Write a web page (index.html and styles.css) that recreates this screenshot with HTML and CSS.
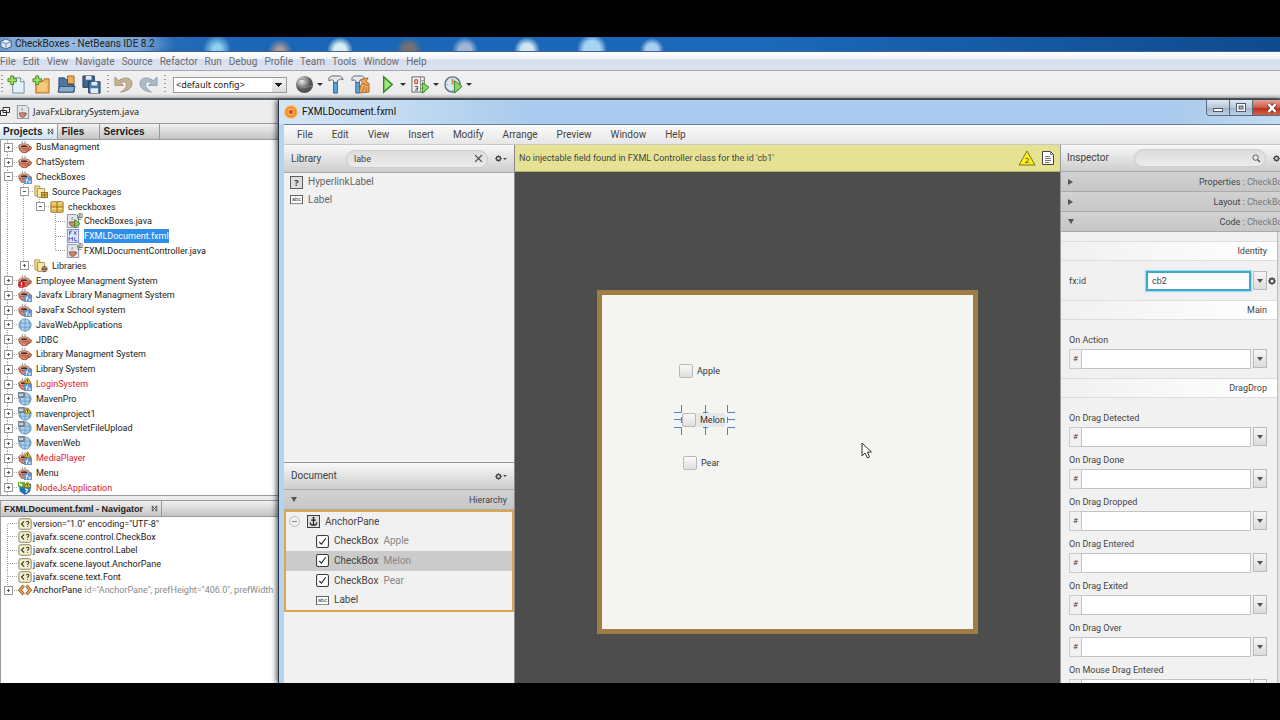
FILE: index.html
```html
<!DOCTYPE html>
<html lang="en">
<head>
  <meta charset="UTF-8">
  <title>CheckBoxes - NetBeans IDE 8.2</title>
  <link rel="stylesheet" href="styles.css">
</head>
<body>
  <svg class="sprite" aria-hidden="true">
    <symbol id="cup" viewBox="0 0 16 16">
      <path d="M5 4c-1-1 1-2 0-3M8 4c-1-1 1-2 0-3" fill="none" stroke="#777" stroke-width="1"/>
      <path d="M1 7c0 5 3 7.500 6.500 7.500S13 12 13 7z" fill="#cf7355" stroke="#8f4733"/>
      <ellipse cx="7" cy="7" rx="6" ry="2.500" fill="#eec7b3" stroke="#99513d"/>
      <ellipse cx="7" cy="7.200" rx="4" ry="1.200" fill="#5b2415"/>
      <path d="M13 8c3-1 3 3-1.500 4" fill="none" stroke="#a5482f" stroke-width="1.500"/>
      <path d="M3 10c1 2 3 3 5 3" fill="none" stroke="#f0b39a"/>
    </symbol>
    <symbol id="fx" viewBox="0 0 16 16">
      <rect x="7" y="8" width="9" height="8" rx="1" fill="#5c92cc"/>
      <path d="M11.500 9.500c-2-.5-1 2-2 5.500M8.500 11.500h3M12 12l2.500 3M14.500 12L12 15" fill="none" stroke="#fff"/>
    </symbol>
    <symbol id="warn" viewBox="0 0 16 16">
      <path d="M11 1l4 6H7z" fill="#f6d73c" stroke="#7e6a12"/>
      <path d="M11 3v3" stroke="#222"/>
    </symbol>
    <symbol id="err" viewBox="0 0 16 16">
      <circle cx="4" cy="12" r="4" fill="#d4202a"/>
      <path d="M4 9.500v3M4 13.500v1" stroke="#fff" stroke-width="1.500"/>
    </symbol>
    <symbol id="web" viewBox="0 0 16 16">
      <circle cx="8" cy="8" r="7" fill="#a9cfea" stroke="#5f8bad"/>
      <path d="M1.500 6h13M1.500 10.500h13M8 1v14M4 2.500c-2 3-2 8 0 11M12 2.500c2 3 2 8 0 11" fill="none" stroke="#6d9cc4"/>
    </symbol>
    <symbol id="maven" viewBox="0 0 16 16">
      <rect x="0" y="0" width="7" height="6" rx="1" fill="#8b97a5" stroke="#5d6875"/>
      <path d="M2 4.500v-2l1.500 1.500L5 2.500v2" fill="none" stroke="#fff"/>
    </symbol>
    <symbol id="node" viewBox="0 0 16 16">
      <path d="M1 3h14l-1 9-6 4-6-4z" fill="#1d72b8"/>
      <path d="M0 1h8v6H0z" fill="#6bab3c"/>
      <path d="M2 5V3l2 2V3M8 9l3 1-2 3" fill="none" stroke="#fff" stroke-width="1.300"/>
    </symbol>
    <symbol id="folder" viewBox="0 0 16 16">
      <path d="M1 1h5l1 2v11L1 12z" fill="#f3d98a" stroke="#b08c3a"/>
      <path d="M4 4h8v10H4z" fill="#f8e7ab" stroke="#b08c3a"/>
    </symbol>
    <symbol id="pkgbadge" viewBox="0 0 16 16">
      <rect x="8.500" y="8.500" width="7" height="6" fill="#e3b54b" stroke="#8e6b1e"/>
      <path d="M8.500 11.500h7M12 8.500v6" stroke="#8e6b1e"/>
    </symbol>
    <symbol id="libbadge" viewBox="0 0 16 16">
      <circle cx="12" cy="11.500" r="3.500" fill="#6e5a45"/>
      <path d="M9 10h6M9 13h6" stroke="#c9b08d"/>
    </symbol>
    <symbol id="package" viewBox="0 0 16 16">
      <rect x="1" y="2" width="14" height="12" rx="1" fill="#e9bf57" stroke="#8e6b1e"/>
      <path d="M1 8h14M8 2v12" stroke="#8e6b1e"/>
      <path d="M2 3.500h5M9 3.500h5M2 9.500h5M9 9.500h5" stroke="#f9e6a6"/>
    </symbol>
    <symbol id="java" viewBox="0 0 16 16">
      <path d="M1.500.5h10l3 3v12h-13z" fill="#dfe5ec" stroke="#7f8a96"/>
      <path d="M4 9c0 3 1 5 3.500 5S11 12 11 9z" fill="#cf8a6f" stroke="#8d4f3b"/>
      <path d="M7 6.500c-1-1 1-2 0-3M10.500 9.500c3 0 2 2 0 2" fill="none" stroke="#8b5b48"/>
    </symbol>
    <symbol id="runbadge" viewBox="0 0 16 16">
      <path d="M10 6.500l6 4.500-6 4.500z" fill="#8ed25a" stroke="#2d7d1e"/>
    </symbol>
    <symbol id="fxml" viewBox="0 0 16 16">
      <rect x="1.500" y=".5" width="13" height="15" fill="#dfe6fb" stroke="#7484c8"/>
      <path d="M4 7V2.500h3M4 4.500h2M9 2.500l3 4M12 2.500l-3 4M3.500 13.500v-4l2 2 2-2v4M10 9.500v4h3" fill="none" stroke="#3c50c4"/>
    </symbol>
    <symbol id="tag" viewBox="0 0 16 16">
      <rect x="1" y="2" width="14" height="12" rx="2" fill="#f7f0c8" stroke="#7b734c"/>
      <path d="M7 5L4 8l3 3" fill="none" stroke="#333" stroke-width="1.300"/>
      <path d="M9.500 6c0-1.500 3-1.500 3 0S11 7.500 11 9M11 10.500v1" fill="none" stroke="#333" stroke-width="1.200"/>
    </symbol>
    <symbol id="element" viewBox="0 0 16 16">
      <path d="M6.500 3L2 8l4.500 5M9.500 3L14 8l-4.500 5" fill="none" stroke="#a4612a" stroke-width="3.500"/>
      <path d="M6.500 3L2 8l4.500 5M9.500 3L14 8l-4.500 5" fill="none" stroke="#f0a95c" stroke-width="1.500"/>
    </symbol>
    <symbol id="gear" viewBox="0 0 12 12">
      <circle cx="6" cy="6" r="3.500" fill="none" stroke="#4c4c4c" stroke-width="2.500"/>
      <path d="M6 0v2M6 10v2M0 6h2M10 6h2M2 2l1 1M9 9l1 1M2 10l1-1M9 3l1-1" stroke="#4c4c4c" stroke-width="1.500"/>
    </symbol>
    <symbol id="check" viewBox="0 0 12 12">
      <rect x=".5" y=".5" width="11" height="11" rx="1.500" fill="#fff" stroke="#3c3c3c"/>
      <path d="M3 6.500l2 2L9 3" fill="none" stroke="#2c2c2c" stroke-width="1.100"/>
    </symbol>
    <symbol id="abc" viewBox="0 0 14 10">
      <rect x=".5" y=".5" width="13" height="9" fill="#fff" stroke="#555"/>
      <text x="7" y="7" font-family="Liberation Sans" font-size="6" text-anchor="middle" fill="#333">abc</text>
    </symbol>
    <symbol id="closetab" viewBox="0 0 8 8">
      <path d="M1.500 1v6M6.500 1v6M1 1.500h2M5 1.500h2M1 6.500h2M5 6.500h2M2 2l4 4M6 2L2 6" fill="none" stroke="#555"/>
    </symbol>
  </svg>

  <div class="screen">
    <header class="titlebar">
      <svg class="cube" viewBox="0 0 14 14"><path d="M7 1l6 3v6l-6 3-6-3V4z" fill="#dbe9f7" stroke="#2c4d73"/><path d="M1 4l6 3 6-3M7 7v6" fill="none" stroke="#56799f"/></svg>
      <h1>CheckBoxes - NetBeans IDE 8.2</h1>
    </header>

    <nav class="menubar">
      <a href="#">File</a><a href="#">Edit</a><a href="#">View</a><a href="#">Navigate</a><a href="#">Source</a><a href="#">Refactor</a><a href="#">Run</a><a href="#">Debug</a><a href="#">Profile</a><a href="#">Team</a><a href="#">Tools</a><a href="#">Window</a><a href="#">Help</a>
    </nav>

    <div class="toolbar">
      <i class="grip first"></i>
      <button class="tool" aria-label="New file"><svg viewBox="0 0 20 20"><path d="M6 3h8l4 4v12H6z" fill="#e4eff8" stroke="#6d8aa5"/><path d="M14 3v4h4" fill="#fff" stroke="#6d8aa5"/><path d="M4 1h3v3h3v3H7v3H4V7H1V4h3z" fill="#a6e05a" stroke="#3f8a1c"/></svg></button>
      <button class="tool" aria-label="New project"><svg viewBox="0 0 20 20"><path d="M4 6h8l1-2h5v15H4z" fill="#f2b45c" stroke="#a9732a"/><path d="M6 8h10v9H6z" fill="#f8c87f"/><path d="M4 1h3v3h3v3H7v3H4V7H1V4h3z" fill="#a6e05a" stroke="#3f8a1c"/></svg></button>
      <button class="tool" aria-label="Open project"><svg viewBox="0 0 20 20"><path d="M11 1h7v8h-7z" fill="#f0ab57" stroke="#a66d27"/><path d="M2 3h6l1 2h2v5h7v8H2z" fill="#50799e" stroke="#2c4f72"/><path d="M1 18l2-6h16l-2 6z" fill="#87acc9" stroke="#2c4f72"/></svg></button>
      <button class="tool" aria-label="Save all"><svg viewBox="0 0 20 20"><path d="M1 1h12v12H1z" fill="#3f668c" stroke="#1f3c5b"/><path d="M4 1h6v4H4z" fill="#dfe9f2"/><path d="M7 7h12v12H7z" fill="#4a759e" stroke="#1f3c5b"/><path d="M10 7h6v4h-6zM9 14h8v5H9z" fill="#e4edf5"/></svg></button>
      <i class="grip"></i>
      <button class="tool" aria-label="Undo"><svg viewBox="0 0 20 20"><path d="M1 2v9h9L7 8c4-2 7 0 6 4-1 2-3 4-6 6 7-1 12-4 12-9 0-6-8-8-14-3z" fill="#c5b297" stroke="#a8957a"/></svg></button>
      <button class="tool" aria-label="Redo"><svg viewBox="0 0 20 20"><path d="M19 2v9h-9l3-3C9 6 6 8 7 12c1 2 3 4 6 6C6 17 1 14 1 9c0-6 8-8 14-3z" fill="#abbcc8" stroke="#8fa2b0"/></svg></button>
      <i class="grip"></i>
      <select class="config" aria-label="Configuration"><option>&lt;default config&gt;</option></select>
      <button class="tool" aria-label="Browser"><svg viewBox="0 0 20 20"><defs><radialGradient id="ball" cx=".35" cy=".3"><stop offset="0" stop-color="#eee"/><stop offset="1" stop-color="#555"/></radialGradient></defs><circle cx="10" cy="10" r="9" fill="url(#ball)"/><path d="M5 5c3-2 4 1 7 0M3 12c4-2 5 2 9 1s4-2 6-1" fill="none" stroke="#888"/></svg></button><i class="caret"></i>
      <button class="tool" aria-label="Build"><svg viewBox="0 0 20 20"><path d="M3 6V3l3-2h8c2 0 3 1 4 4-2-1-3-1-4 0l-2 1v2H8V6L6 5z" fill="#e4e8ec" stroke="#5f6a75"/><path d="M8 8h4v11H8z" fill="#5ba3d9" stroke="#276a9d"/></svg></button>
      <button class="tool" aria-label="Clean and build"><svg viewBox="0 0 20 20"><path d="M1 6V3l2-2h8c2 0 3 1 4 4-2-1-3-1-4 0L9 6v2H5V6L3 5z" fill="#e4e8ec" stroke="#5f6a75"/><path d="M5 8h4v11H5z" fill="#5ba3d9" stroke="#276a9d"/><path d="M18 3l-2 4 3 2v9l-10 1c0-5 1-8 3-11l-2-3z" fill="#efa857" stroke="#a5682a"/><path d="M12 9l6 2M12 18l2-6M16 18v-5" fill="none" stroke="#a5682a"/></svg></button>
      <button class="tool split" aria-label="Run"><svg viewBox="0 0 20 20"><path d="M6 2l9 8-9 8z" fill="#a5e57a" stroke="#2f8a25" stroke-width="1.500"/></svg></button><i class="caret"></i>
      <button class="tool split" aria-label="Debug"><svg viewBox="0 0 20 20"><path d="M1 2h13v16H1z" fill="#f4f4f4" stroke="#666"/><path d="M10 2v16M10 6h4M10 10h4M10 14h4" stroke="#888"/><path d="M4 5h3v4H4z" fill="#f8c5b8" stroke="#c0392b"/><path d="M4 12h3v4H4M5 14h2" fill="none" stroke="#555"/><path d="M12 8l7 5-7 6z" fill="#8fd65c" stroke="#2f8a25"/></svg></button><i class="caret"></i>
      <button class="tool split" aria-label="Profile"><svg viewBox="0 0 20 20"><circle cx="9" cy="10" r="8" fill="#dce9f4" stroke="#5c7288" stroke-width="1.500"/><path d="M9 10V4" stroke="#d98a3a" stroke-width="2"/><path d="M3 10h1M9 16v1" stroke="#5c7288"/><path d="M11 6l8 6-8 7z" fill="#8fd65c" stroke="#2f8a25"/></svg></button><i class="caret"></i>
    </div>

    <div class="workspace">
      <aside class="explorer">
        <div class="filetab">
          <svg viewBox="0 0 10 10"><path d="M3 .5h6.500v5H3zM.5 3.500h6v5h-6z" fill="#eee" stroke="#333"/></svg>
          <svg class="icon" viewBox="0 0 16 16"><use href="#java"/></svg>
          <span>JavaFxLibrarySystem.java</span>
        </div>
        <div class="tabs">
          <button class="tab active">Projects <svg viewBox="0 0 8 8"><use href="#closetab"/></svg></button>
          <button class="tab files">Files</button>
          <button class="tab services">Services</button>
        </div>
        <ul class="tree projects">
          <li><button class="knob plus" aria-label="Expand"></button><svg class="icon"><use href="#cup"/></svg><span>BusManagment</span></li>
          <li><button class="knob plus" aria-label="Expand"></button><svg class="icon"><use href="#cup"/></svg><span>ChatSystem</span></li>
          <li><button class="knob" aria-label="Collapse"></button><svg class="icon"><use href="#cup"/><use href="#fx"/></svg><span>CheckBoxes</span></li>
          <li><i class="line"></i><button class="knob" aria-label="Collapse"></button><svg class="icon"><use href="#folder"/><use href="#pkgbadge"/></svg><span>Source Packages</span></li>
          <li><i class="line"></i><i class="line"></i><button class="knob last" aria-label="Collapse"></button><svg class="icon"><use href="#package"/></svg><span>checkboxes</span></li>
          <li><i class="line"></i><i class="line"></i><i></i><i class="line tee"></i><svg class="icon"><use href="#java"/><use href="#runbadge"/></svg><span class="linked">CheckBoxes.java</span></li>
          <li><i class="line"></i><i class="line"></i><i></i><i class="line tee"></i><svg class="icon"><use href="#fxml"/></svg><span class="selected">FXMLDocument.fxml</span></li>
          <li><i class="line"></i><i class="line"></i><i></i><i class="line tee end"></i><svg class="icon"><use href="#java"/></svg><span class="linked">FXMLDocumentController.java</span></li>
          <li><i class="line"></i><button class="knob plus last" aria-label="Expand"></button><svg class="icon"><use href="#folder"/><use href="#libbadge"/></svg><span>Libraries</span></li>
          <li><button class="knob plus" aria-label="Expand"></button><svg class="icon"><use href="#cup"/><use href="#err"/></svg><span>Employee Managment System</span></li>
          <li><button class="knob plus" aria-label="Expand"></button><svg class="icon"><use href="#cup"/><use href="#fx"/></svg><span>Javafx Library Managment System</span></li>
          <li><button class="knob plus" aria-label="Expand"></button><svg class="icon"><use href="#cup"/><use href="#fx"/></svg><span>JavaFx School system</span></li>
          <li><button class="knob plus" aria-label="Expand"></button><svg class="icon"><use href="#web"/></svg><span>JavaWebApplications</span></li>
          <li><button class="knob plus" aria-label="Expand"></button><svg class="icon"><use href="#cup"/></svg><span>JDBC</span></li>
          <li><button class="knob plus" aria-label="Expand"></button><svg class="icon"><use href="#cup"/></svg><span>Library Managment System</span></li>
          <li><button class="knob plus" aria-label="Expand"></button><svg class="icon"><use href="#cup"/><use href="#fx"/></svg><span>Library System</span></li>
          <li><button class="knob plus" aria-label="Expand"></button><svg class="icon"><use href="#cup"/><use href="#fx"/><use href="#warn"/></svg><span class="broken">LoginSystem</span></li>
          <li><button class="knob plus" aria-label="Expand"></button><svg class="icon"><use href="#web"/><use href="#maven"/></svg><span>MavenPro</span></li>
          <li><button class="knob plus" aria-label="Expand"></button><svg class="icon"><use href="#web"/><use href="#maven"/><use href="#warn"/></svg><span>mavenproject1</span></li>
          <li><button class="knob plus" aria-label="Expand"></button><svg class="icon"><use href="#web"/><use href="#maven"/></svg><span>MavenServletFileUpload</span></li>
          <li><button class="knob plus" aria-label="Expand"></button><svg class="icon"><use href="#web"/><use href="#maven"/></svg><span>MavenWeb</span></li>
          <li><button class="knob plus" aria-label="Expand"></button><svg class="icon"><use href="#cup"/><use href="#fx"/><use href="#warn"/></svg><span class="broken">MediaPlayer</span></li>
          <li><button class="knob plus" aria-label="Expand"></button><svg class="icon"><use href="#cup"/><use href="#fx"/></svg><span>Menu</span></li>
          <li><button class="knob plus" aria-label="Expand"></button><svg class="icon"><use href="#node"/><use href="#warn"/></svg><span class="broken">NodeJsApplication</span></li>
        </ul>
        <section class="navigator">
          <div class="tabs">
            <button class="tab file">FXMLDocument.fxml - Navigator <svg viewBox="0 0 8 8"><use href="#closetab"/></svg></button>
          </div>
          <ul class="tree nodes">
            <li><i class="line tee start"></i><svg class="icon"><use href="#tag"/></svg><span>version="1.0" encoding="UTF-8"</span></li>
            <li><i class="line tee"></i><svg class="icon"><use href="#tag"/></svg><span>javafx.scene.control.CheckBox</span></li>
            <li><i class="line tee"></i><svg class="icon"><use href="#tag"/></svg><span>javafx.scene.control.Label</span></li>
            <li><i class="line tee"></i><svg class="icon"><use href="#tag"/></svg><span>javafx.scene.layout.AnchorPane</span></li>
            <li><i class="line tee"></i><svg class="icon"><use href="#tag"/></svg><span>javafx.scene.text.Font</span></li>
            <li><button class="knob plus last" aria-label="Expand"></button><svg class="icon"><use href="#element"/></svg><span>AnchorPane <em>id="AnchorPane", prefHeight="406.0", prefWidth</em></span></li>
          </ul>
        </section>
      </aside>

      <main class="builder">
        <header class="caption">
          <svg viewBox="0 0 14 14"><circle cx="7" cy="7" r="6" fill="#f08a1e" stroke="#f6b04a" stroke-width="1.500"/><path d="M4 4l6 6M10 4l-6 6M7 3v8M3 7h8" stroke="#fbd3a0"/><circle cx="7" cy="7" r="2" fill="#d9481c"/></svg>
          <h2>FXMLDocument.fxml</h2>
          <div class="winbuttons">
            <button aria-label="Minimize"><svg viewBox="0 0 12 10"><rect x="1.500" y="5.500" width="9" height="3" fill="#fff" stroke="#4d5a6b"/></svg></button>
            <button aria-label="Restore"><svg viewBox="0 0 12 10"><rect x="1.500" y=".5" width="9" height="8" fill="#fff" stroke="#4d5a6b"/><rect x="4" y="3" width="4" height="3" fill="#9fb4ca" stroke="#4d5a6b"/></svg></button>
            <button class="close" aria-label="Close"><svg viewBox="0 0 12 10"><path d="M2.500 1l7 8M9.500 1l-7 8" stroke="#5e3030" stroke-width="4"/><path d="M2.500 1l7 8M9.500 1l-7 8" stroke="#fff" stroke-width="2.500"/></svg></button>
          </div>
        </header>
        <nav class="fxmenu">
          <a href="#">File</a><a href="#">Edit</a><a href="#">View</a><a href="#">Insert</a><a href="#">Modify</a><a href="#">Arrange</a><a href="#">Preview</a><a href="#">Window</a><a href="#">Help</a>
        </nav>
        <div class="panes">
          <section class="left">
            <div class="bar">
              <label for="library">Library</label>
              <div class="search">
                <input id="library" type="text" value="labe">
                <button aria-label="Clear"><svg viewBox="0 0 8 8"><path d="M1 1l6 6M7 1L1 7" stroke="#444" stroke-width="1.100"/></svg></button>
              </div>
              <button class="cog" aria-label="Library options"><svg viewBox="0 0 12 12"><use href="#gear"/></svg><i></i></button>
            </div>
            <ul class="library">
              <li><svg viewBox="0 0 14 14"><rect x=".5" y=".5" width="13" height="13" fill="#ddd" stroke="#555"/><text x="7" y="11" font-family="Open Sans" font-size="10" font-weight="700" text-anchor="middle" fill="#333">?</text></svg>HyperlinkLabel</li>
              <li><svg viewBox="0 0 14 10"><use href="#abc"/></svg>Label</li>
            </ul>
            <div class="bar document">
              <h3>Document</h3>
              <button class="cog" aria-label="Document options"><svg viewBox="0 0 12 12"><use href="#gear"/></svg><i></i></button>
            </div>
            <button class="fold open"><i></i><span>Hierarchy</span></button>
            <ul class="hierarchy">
              <li class="root"><button aria-label="Collapse"></button><svg viewBox="0 0 14 14"><rect x=".5" y=".5" width="13" height="13" fill="#ddd" stroke="#333"/><path d="M7 3v8M4.500 5.500h5M3.500 8c0 4 7 4 7 0" fill="none" stroke="#222" stroke-width="1.300"/><circle cx="7" cy="3" r="1" fill="#222"/></svg>AnchorPane</li>
              <li><svg viewBox="0 0 12 12"><use href="#check"/></svg>CheckBox <em>Apple</em></li>
              <li class="current"><svg viewBox="0 0 12 12"><use href="#check"/></svg>CheckBox <em>Melon</em></li>
              <li><svg viewBox="0 0 12 12"><use href="#check"/></svg>CheckBox <em>Pear</em></li>
              <li><svg viewBox="0 0 14 10"><use href="#abc"/></svg>Label</li>
            </ul>
          </section>

          <section class="content">
            <div class="message">
              <span>No injectable field found in FXML Controller class for the id 'cb1'</span>
              <svg class="alert" viewBox="0 0 18 16"><path d="M9 1l8 14H1z" fill="#ffee1a" stroke="#77731c"/><text x="9" y="13" font-family="Open Sans" font-size="8" text-anchor="middle" fill="#333">2</text></svg>
              <svg class="page" viewBox="0 0 12 14"><path d="M.5.5h8l3 3v10H.5z" fill="#fff" stroke="#444"/><path d="M8.500.5v3h3M3 5.500h5M3 7.500h6M3 9.500h6M3 11.500h4" fill="none" stroke="#777"/></svg>
            </div>
            <div class="canvas">
              <div class="artboard">
                <label class="apple"><input type="checkbox">Apple</label>
                <label class="melon"><input type="checkbox">Melon</label>
                <label class="pear"><input type="checkbox">Pear</label>
                <svg class="handles" viewBox="0 0 62 32"><path d="M7.500 1v7.500H0M53.500 1v7.500H61M7.500 31v-7.500H0M53.500 31v-7.500H61M31.500 1v7.500M29 8.500h5M31.500 31v-7.500M29 23.500h5M0 15.500h7.500M7.500 13v6M61 15.500h-7.500M53.500 13v6" fill="none" stroke="#3f8cc9"/></svg>
                <svg class="pointer" viewBox="0 0 12 18"><path d="M1 1v13l3-3 2.500 5 2-1-2-5h4z" fill="#fff" stroke="#333"/></svg>
              </div>
            </div>
          </section>

          <section class="inspector">
            <div class="bar">
              <label for="find">Inspector</label>
              <div class="search">
                <input id="find" type="text">
                <svg viewBox="0 0 10 10"><circle cx="4" cy="4" r="3" fill="none" stroke="#555"/><path d="M6 6l3 3" stroke="#555" stroke-width="1.500"/></svg>
              </div>
              <button class="cog" aria-label="Inspector options"><svg viewBox="0 0 12 12"><use href="#gear"/></svg></button>
            </div>
            <button class="fold"><i></i><span>Properties : <em>CheckBox</em></span></button>
            <button class="fold"><i></i><span>Layout : <em>CheckBox</em></span></button>
            <button class="fold open"><i></i><span>Code : <em>CheckBox</em></span></button>
            <div class="code">
              <div class="fields">
                <h4>Identity</h4>
                <div class="identity">
                  <label for="fxid">fx:id</label>
                  <input id="fxid" type="text" value="cb2">
                  <button class="drop" aria-label="Choose id"></button>
                  <svg viewBox="0 0 12 12"><use href="#gear"/></svg>
                </div>
                <h4>Main</h4>
                <div class="group">
                  <div class="event"><label for="action">On Action</label><i>#</i><input id="action" type="text"><button class="drop" aria-label="Choose method"></button></div>
                </div>
                <h4>DragDrop</h4>
                <div class="group">
                  <div class="event"><label for="detected">On Drag Detected</label><i>#</i><input id="detected" type="text"><button class="drop" aria-label="Choose method"></button></div>
                  <div class="event"><label for="done">On Drag Done</label><i>#</i><input id="done" type="text"><button class="drop" aria-label="Choose method"></button></div>
                  <div class="event"><label for="dropped">On Drag Dropped</label><i>#</i><input id="dropped" type="text"><button class="drop" aria-label="Choose method"></button></div>
                  <div class="event"><label for="entered">On Drag Entered</label><i>#</i><input id="entered" type="text"><button class="drop" aria-label="Choose method"></button></div>
                  <div class="event"><label for="exited">On Drag Exited</label><i>#</i><input id="exited" type="text"><button class="drop" aria-label="Choose method"></button></div>
                  <div class="event"><label for="over">On Drag Over</label><i>#</i><input id="over" type="text"><button class="drop" aria-label="Choose method"></button></div>
                  <div class="event"><label for="mouse">On Mouse Drag Entered</label><i>#</i><input id="mouse" type="text"><button class="drop" aria-label="Choose method"></button></div>
                </div>
              </div>
              <div class="scrollbar"></div>
            </div>
          </section>
        </div>
      </main>
    </div>
  </div>
</body>
</html>
```

FILE: styles.css
```css
* { box-sizing: border-box; }
body { margin: 0; padding: 37px 0; height: 100vh; background: #000; font: 9px/14px Roboto, sans-serif; color: #222; overflow: hidden; }
h1, h2, h3, h4, ul { margin: 0; padding: 0; font-size: inherit; font-weight: normal; list-style: none; }
button, input, select { font: inherit; color: inherit; margin: 0; padding: 0; border: 0; border-radius: 0; background: none; min-width: 0; }
a { color: inherit; text-decoration: none; }
i, em { font-style: normal; }
svg { flex: none; display: block; }
.sprite { display: none; }

.screen { height: 100%; display: flex; flex-direction: column; overflow: hidden; background: #ededed; }
.titlebar {
  display: flex; align-items: center; gap: 3px; height: 14px; flex: none;
  background:
    radial-gradient(ellipse 100px 24px at 75px 50%, rgba(190, 215, 240, .75), rgba(190, 215, 240, .5) 70%, transparent),
    radial-gradient(circle at 217px 12px, #8fd0ee 4px, transparent 14px),
    radial-gradient(circle at 280px 14px, #b09a94 3px, transparent 12px),
    radial-gradient(circle at 340px 13px, #d6ecf0 6px, transparent 13px),
    radial-gradient(circle at 409px 13px, #77706f 5px, transparent 13px),
    radial-gradient(circle at 465px 13px, #9db5d6 6px, transparent 13px),
    radial-gradient(circle at 527px 13px, #cfe6ee 6px, transparent 13px),
    radial-gradient(circle at 592px 12px, #a8d4f4 8px, transparent 15px),
    radial-gradient(circle at 652px 13px, #a9cdec 6px, transparent 12px),
    linear-gradient(90deg, #3a76b9, #1a65b6 20%, #1b68b8 60%, #0f4a8c);
}
.titlebar h1 { font-size: 10px; }
.cube { width: 12px; height: 12px; }
.menubar { display: flex; gap: 7px; flex: none; height: 20px; padding: 2px 0 0; border-top: 1px solid #42618d; border-bottom: 1px solid #a5a8b3; background: linear-gradient(#fff, #f1f5fb 35%, #d6deed 45%, #dfe3f1); font-size: 10px; line-height: 16px; color: #6c6c70; }
.toolbar { display: flex; align-items: center; flex: none; height: 29px; background: linear-gradient(#f1f1f1, #ececec 85%, #bbb); border-bottom: 2px solid #596069; }
.grip { width: 7px; height: 20px; background: repeating-linear-gradient(#999 0 1px, transparent 1px 4px) center/2px 100% no-repeat; }
.grip.first { width: 4px; }
.tool { width: 25px; height: 22px; display: grid; place-items: center; }
.tool svg { width: 19px; height: 19px; }
.tool.split { margin-left: 2px; }
.caret { width: 6px; border: solid transparent; border-width: 3px 3px 0; border-top-color: #333; }
.config { width: 114px; height: 16px; margin: 0 5px; padding-left: 2px; border: 1px solid #9a9a9a; appearance: none; font: 9px/14px "Noto Sans", sans-serif; background: conic-gradient(from -45deg at 50% 100%, #222 90deg, transparent 0) right 4px center/7px 4px no-repeat, linear-gradient(#f4f4f4, #ddd) right/14px 100% no-repeat, #fff; }

.workspace { flex: 1; min-height: 0; display: flex; }
.explorer { flex: 0 0 278px; min-width: 0; display: flex; flex-direction: column; overflow: hidden; }
.filetab { display: flex; align-items: center; gap: 3px; flex: none; height: 23px; font-family: "Noto Sans", sans-serif; }
.filetab svg { width: 10px; height: 10px; }
.filetab .icon { width: 14px; height: 14px; margin-left: 3px; }
.tabs { display: flex; flex: none; height: 17px; border: solid #9a9a9a; border-width: 1px 0; background: linear-gradient(#f1f1f1, #c4c4c4); }
.tab { display: flex; align-items: center; gap: 5px; padding: 0 3px; border-right: 1px solid #999; font: bold 10px/14px "Liberation Sans", sans-serif; }
.tab svg { width: 7px; height: 7px; }
.tab.active { background: linear-gradient(#fff, #cbe3f3); }
.tab.files { width: 42px; }
.tab.services { width: 60px; }
.tab.file { font-size: 9px; gap: 8px; }
.tree { display: grid; grid-auto-rows: 1fr; background: #fff; border-left: 1px solid #999; }
.tree li { display: flex; align-items: center; min-height: 0; min-width: 0; line-height: 14px; white-space: nowrap; }
.tree li > i, .knob { flex: none; width: 16px; align-self: stretch; }
.line, .knob { background: repeating-linear-gradient(#aaa 0 1px, transparent 1px 2px) 6px 0/1px 100% no-repeat; }
.line.tee, .knob { background: repeating-linear-gradient(#aaa 0 1px, transparent 1px 2px) 6px 0/1px 100% no-repeat, repeating-linear-gradient(90deg, #aaa 0 1px, transparent 1px 2px) 7px 50%/9px 1px no-repeat; }
.line.end, .knob.last { background-size: 1px 50%, 9px 1px; }
.line.start { background-position: 6px 100%, 7px 50%; background-size: 1px 50%, 9px 1px; }
.knob { display: flex; align-items: center; padding-left: 3px; }
.knob::before { content: ""; width: 7px; height: 7px; border: 1px solid #999; background: linear-gradient(#556, #556) center/3px 1px no-repeat, #fff; }
.knob.plus::before { background: linear-gradient(#556, #556) center/3px 1px no-repeat, linear-gradient(#556, #556) center/1px 3px no-repeat, #fff; }
.tree .icon { width: 14px; height: 14px; margin: 0 4px 0 1px; }
.selected { background: #2f8eea; color: #fff; }
.linked { position: relative; }
.linked::before { content: "@"; position: absolute; left: -7px; top: -3px; font-size: 7px; line-height: 10px; }
.broken { color: #e02030; }
.projects { flex: none; height: 356px; border-bottom: 1px solid #999; }
.navigator { flex: 1; margin-top: 4px; background: #fff; border-left: 1px solid #999; }
.nodes { height: 80px; border: 0; }
.nodes em { color: #8a8a8a; }
.tree.nodes .icon { margin-right: 1px; }

.builder { flex: 1; min-width: 0; display: flex; flex-direction: column; position: relative; border-left: 1px solid #22344c; background: #b7d3ee; box-shadow: -2px 0 5px rgba(0, 0, 0, .6); color: #444; }
.caption { display: flex; align-items: center; gap: 4px; flex: none; height: 24px; padding-left: 5px; background: linear-gradient(90deg, #d5e5f5, #c3dbf2 12%, #a9cbed 25%, #aacbed 90%, #c4dcf3); color: #111; }
.caption svg { width: 14px; height: 14px; }
.caption h2 { flex: 1; font-size: 10px; }
.winbuttons { display: flex; align-self: flex-start; border: solid #5a6b7f; border-width: 0 0 1px 1px; border-radius: 0 0 0 4px; overflow: hidden; }
.winbuttons button { width: 23px; height: 15px; display: grid; place-items: center; border-right: 1px solid #5a6b7f; background: linear-gradient(#dde7f1, #b9c8d8 50%, #9fb4ca 52%, #c0d2e3); }
.winbuttons svg { width: 12px; height: 10px; }
.winbuttons .close { width: 27px; padding-left: 11px; border: 0; background: linear-gradient(#e4a394, #cf5a47 50%, #b8301c 52%, #d0614a); }
.fxmenu { display: flex; gap: 19px; flex: none; height: 21px; margin-left: 5px; padding: 0 13px; border-top: 1px solid #6d7f92; border-bottom: 1px solid #c8c8c8; background: linear-gradient(#fbfbfb, #e6e6e6); font-size: 10px; line-height: 20px; }
.panes { flex: 1; min-height: 0; display: flex; margin-left: 5px; }
.left { flex: 0 0 231px; min-width: 0; display: flex; flex-direction: column; background: #f1f1f1; border-right: 1px solid #888; }
.bar { display: flex; align-items: center; flex: none; height: 28px; padding: 0 7px; background: linear-gradient(#f8f8f8, #cdcdcd); border-bottom: 1px solid #aaa; font-size: 10px; }
.bar label { flex: none; width: 55px; }
.bar h3 { flex: 1; }
.search { flex: 1; min-width: 0; height: 18px; display: flex; align-items: center; padding: 0 4px 0 7px; border: 1px solid #ccc; border-radius: 9px; background: linear-gradient(#dcdcdc, #ececec); }
.search input { flex: 1; width: 0; font-size: 9px; }
.search svg { width: 9px; height: 9px; }
.cog { display: flex; align-items: center; gap: 1px; margin-left: 7px; }
.cog svg { width: 7px; height: 7px; }
.cog i { border: solid transparent; border-width: 2px 2px 0; border-top-color: #444; }
.library { flex: 1; font-size: 10px; }
.library li { display: flex; align-items: center; gap: 5px; height: 18px; padding-left: 6px; color: #666; }
.library svg, .hierarchy svg { width: 13px; }
.document { border-top: 1px solid #999; }
.fold { display: flex; align-items: center; justify-content: space-between; flex: none; height: 20px; padding: 0 7px; border-bottom: 1px solid #aaa; background: linear-gradient(#d2d2d2, #c6c6c6); white-space: nowrap; }
.fold i { border: solid transparent; border-width: 3px 0 3px 5px; border-left-color: #555; }
.fold.open i { border-width: 5px 3px 0; border-color: #555 transparent; }
.fold em { color: #777; }
.hierarchy { display: grid; grid-auto-rows: 1fr; height: 102px; margin-bottom: 71px; border: 2px solid #dea550; font-size: 10px; }
.hierarchy li { display: flex; align-items: center; min-height: 0; gap: 5px; padding-left: 30px; }
.hierarchy .root { padding-left: 3px; }
.root button { width: 11px; height: 11px; margin-right: 2px; border: 1px solid #bbb; border-radius: 50%; background: linear-gradient(#888, #888) center/5px 1px no-repeat; }
.hierarchy em { color: #888; }
.hierarchy .current { background: #cbcbcb; }

.content { flex: 1; min-width: 0; display: flex; flex-direction: column; }
.message { display: flex; align-items: center; gap: 6px; flex: none; height: 27px; padding: 0 6px 0 4px; background: #e5e294; border-bottom: 1px solid #b5b26c; }
.message span { flex: 1; }
.alert { width: 18px; height: 16px; }
.page { width: 12px; height: 14px; }
.canvas { flex: 1; min-height: 0; display: flex; justify-content: center; align-items: flex-start; padding-top: 118px; background: repeating-conic-gradient(#4a4a4a 0 25%, #505050 0 50%) 0 0/4px 4px; }
.artboard { position: relative; width: 381px; height: 344px; border: 5px solid #9f7e45; background: #f4f5f1; }
.artboard label { position: absolute; display: flex; align-items: center; gap: 4px; height: 14px; color: #333; }
.artboard input { appearance: none; width: 14px; height: 14px; border: 1px solid #b9b9b9; border-radius: 2px; background: linear-gradient(#fafafa, #dedede); }
.apple { left: 77px; top: 69px; }
.artboard .melon { left: 80px; top: 118px; background: #e8e8e8; }
.pear { left: 81px; top: 161px; }
.handles { position: absolute; left: 72px; top: 109px; width: 62px; height: 32px; }
.pointer { position: absolute; left: 259px; top: 147px; width: 12px; height: 18px; }

.inspector { flex: 0 0 220px; min-width: 0; display: flex; flex-direction: column; background: #f1f1f1; border-left: 1px solid #999; overflow: hidden; }
.inspector .bar { padding: 0 0 0 6px; height: 27px; }
.inspector .bar label { width: 67px; }
.inspector .cog { overflow: hidden; }
.inspector .fold { padding-right: 0; }
.inspector .fold span { margin-right: -7px; }
.code { flex: 1; min-height: 0; display: flex; }
.fields { flex: 1; min-width: 0; padding-top: 9px; }
.fields h4 { height: 20px; padding-right: 10px; border: solid #ddd; border-width: 1px 0; background: linear-gradient(90deg, #f1f1f1, #fff); line-height: 18px; text-align: right; }
.scrollbar { flex: none; width: 3px; background: #e2e2e2; border-left: 1px solid #bbb; }
.identity { display: flex; align-items: center; height: 39px; padding-left: 8px; }
.identity label { width: 77px; }
.identity input { flex: 1; width: 0; height: 20px; padding-left: 4px; border: 2px solid #3fa6cc; background: #fff; box-shadow: 0 0 1px 1px #a5dcee; }
.identity svg { width: 8px; height: 8px; margin: 0 1px; }
.drop { width: 14px; height: 19px; margin-left: 2px; flex: none; display: grid; place-items: center; border: 1px solid #bbb; background: linear-gradient(#f6f6f6, #dcdcdc); }
.drop::before { content: ""; border: solid transparent; border-width: 4px 3px 0; border-top-color: #555; }
.group { padding: 12px 10px 4px 8px; }
.event { display: grid; grid-template-columns: 12px 1fr 16px; margin-bottom: 5px; }
.event label { grid-column: 1 / -1; line-height: 17px; }
.event i { height: 20px; border: 1px solid #ccc; border-right: 0; text-align: center; font-size: 8px; line-height: 18px; }
.event input { height: 20px; border: 1px solid #c4c4c4; background: #fff; }
```
